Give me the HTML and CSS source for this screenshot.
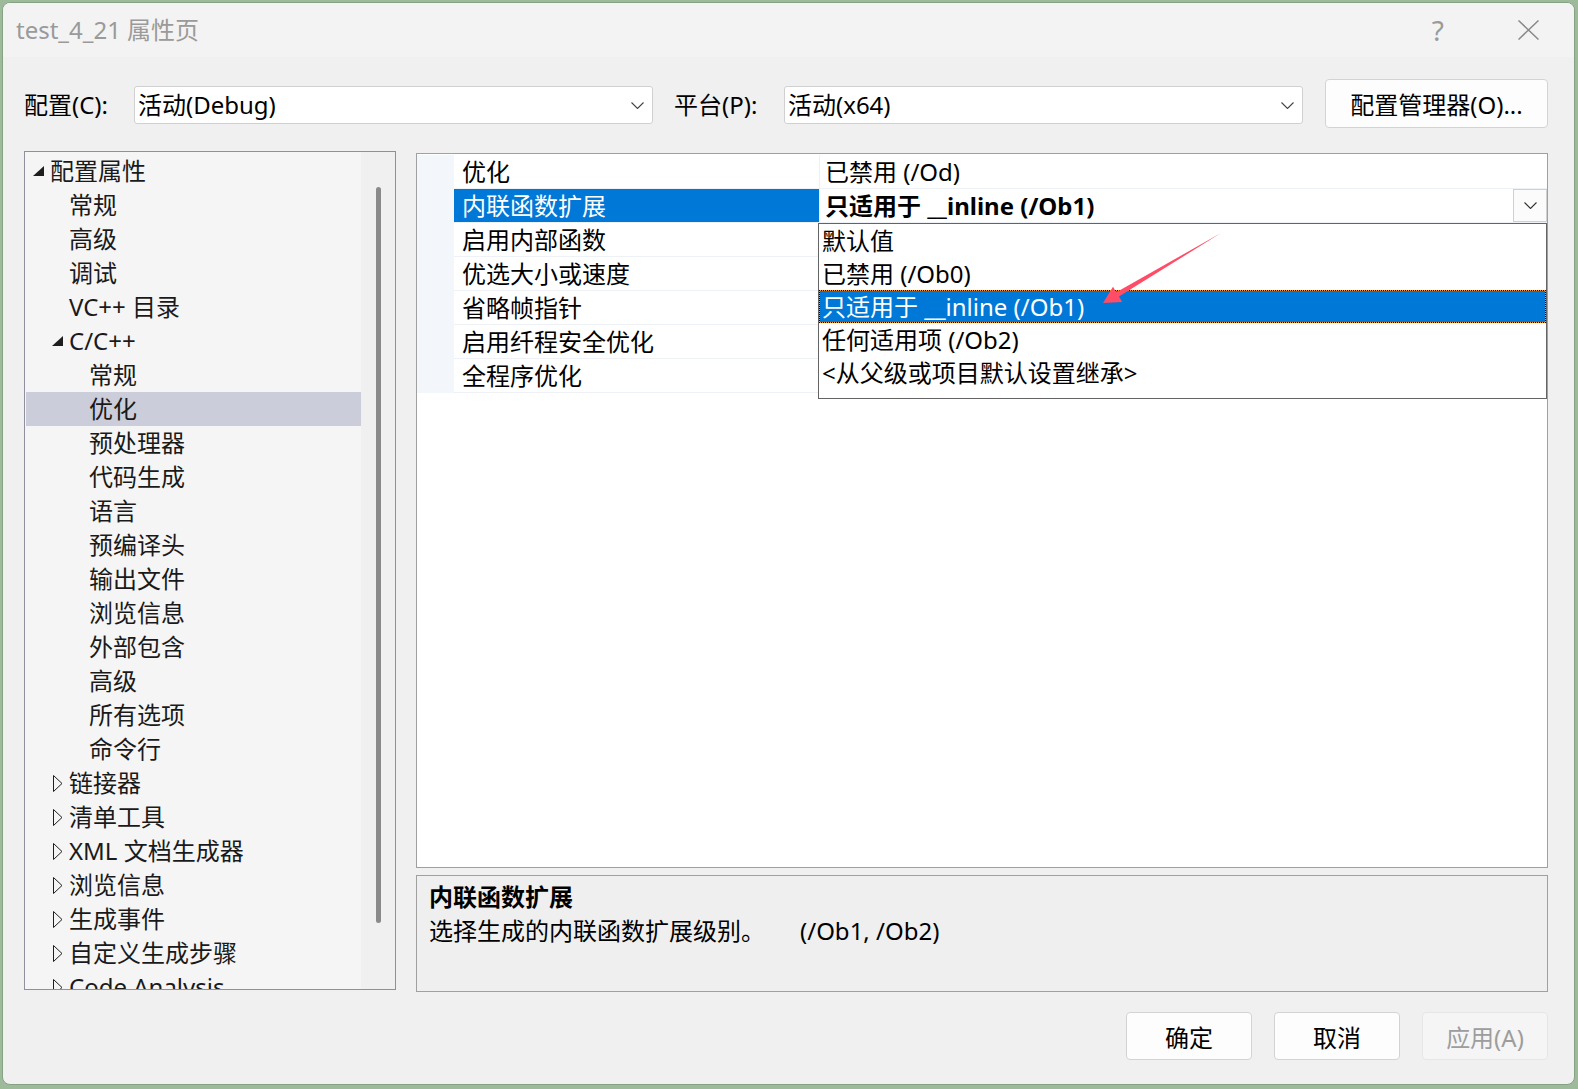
FILE: index.html
```html
<!DOCTYPE html>
<html lang="zh-CN">
<head>
<meta charset="utf-8">
<title>test_4_21 属性页</title>
<link rel="stylesheet" href="styles.css">
</head>
<body>
<div class="window">
  <div class="titlebar">
    <span class="title">test_4_21 属性页</span>
    <span class="help">?</span>
    <svg class="close" viewBox="0 0 21 20"><path d="M0.5 0.5 L20.5 19.5 M20.5 0.5 L0.5 19.5" stroke="#8a8a8a" stroke-width="1.5" fill="none"/></svg>
  </div>
  <div class="content">
    <div class="config-row">
      <span class="label">配置(C):</span>
      <div class="combo"><span>活动(Debug)</span><svg class="chevron" viewBox="0 0 13 7"><path d="M0.5 0.5 L6.5 6.5 L12.5 0.5" stroke="#444" stroke-width="1.1" fill="none"/></svg></div>
      <span class="label platform">平台(P):</span>
      <div class="combo"><span>活动(x64)</span><svg class="chevron" viewBox="0 0 13 7"><path d="M0.5 0.5 L6.5 6.5 L12.5 0.5" stroke="#444" stroke-width="1.1" fill="none"/></svg></div>
      <button class="btn mgr">配置管理器(O)...</button>
    </div>

    <div class="main">
      <div class="tree">
        <div class="tree-list">
          <div class="tree-row lv0"><span class="twisty"><svg class="exp" viewBox="0 0 11 10"><polygon points="0,10 11,0 11,10" fill="#1e1e1e"/></svg></span>配置属性</div>
          <div class="tree-row lv1"><span class="twisty"></span>常规</div>
          <div class="tree-row lv1"><span class="twisty"></span>高级</div>
          <div class="tree-row lv1"><span class="twisty"></span>调试</div>
          <div class="tree-row lv1"><span class="twisty"></span>VC++ 目录</div>
          <div class="tree-row lv1"><span class="twisty"><svg class="exp" viewBox="0 0 11 10"><polygon points="0,10 11,0 11,10" fill="#1e1e1e"/></svg></span>C/C++</div>
          <div class="tree-row lv2"><span class="twisty"></span>常规</div>
          <div class="tree-row lv2 selected"><span class="twisty"></span>优化</div>
          <div class="tree-row lv2"><span class="twisty"></span>预处理器</div>
          <div class="tree-row lv2"><span class="twisty"></span>代码生成</div>
          <div class="tree-row lv2"><span class="twisty"></span>语言</div>
          <div class="tree-row lv2"><span class="twisty"></span>预编译头</div>
          <div class="tree-row lv2"><span class="twisty"></span>输出文件</div>
          <div class="tree-row lv2"><span class="twisty"></span>浏览信息</div>
          <div class="tree-row lv2"><span class="twisty"></span>外部包含</div>
          <div class="tree-row lv2"><span class="twisty"></span>高级</div>
          <div class="tree-row lv2"><span class="twisty"></span>所有选项</div>
          <div class="tree-row lv2"><span class="twisty"></span>命令行</div>
          <div class="tree-row lv1"><span class="twisty"><svg class="col" viewBox="0 0 10 17"><polygon points="0.5,0.5 9,8.5 0.5,16.5" fill="none" stroke="#1e1e1e" stroke-width="1"/></svg></span>链接器</div>
          <div class="tree-row lv1"><span class="twisty"><svg class="col" viewBox="0 0 10 17"><polygon points="0.5,0.5 9,8.5 0.5,16.5" fill="none" stroke="#1e1e1e" stroke-width="1"/></svg></span>清单工具</div>
          <div class="tree-row lv1"><span class="twisty"><svg class="col" viewBox="0 0 10 17"><polygon points="0.5,0.5 9,8.5 0.5,16.5" fill="none" stroke="#1e1e1e" stroke-width="1"/></svg></span>XML 文档生成器</div>
          <div class="tree-row lv1"><span class="twisty"><svg class="col" viewBox="0 0 10 17"><polygon points="0.5,0.5 9,8.5 0.5,16.5" fill="none" stroke="#1e1e1e" stroke-width="1"/></svg></span>浏览信息</div>
          <div class="tree-row lv1"><span class="twisty"><svg class="col" viewBox="0 0 10 17"><polygon points="0.5,0.5 9,8.5 0.5,16.5" fill="none" stroke="#1e1e1e" stroke-width="1"/></svg></span>生成事件</div>
          <div class="tree-row lv1"><span class="twisty"><svg class="col" viewBox="0 0 10 17"><polygon points="0.5,0.5 9,8.5 0.5,16.5" fill="none" stroke="#1e1e1e" stroke-width="1"/></svg></span>自定义生成步骤</div>
          <div class="tree-row lv1"><span class="twisty"><svg class="col" viewBox="0 0 10 17"><polygon points="0.5,0.5 9,8.5 0.5,16.5" fill="none" stroke="#1e1e1e" stroke-width="1"/></svg></span>Code Analysis</div>
        </div>
        <div class="vscroll"><div class="thumb"></div></div>
      </div>

      <div class="right">
        <div class="grid">
          <div class="grid-row"><div class="gutter"></div><div class="name">优化</div><div class="value">已禁用 (/Od)</div></div>
          <div class="grid-row"><div class="gutter"></div><div class="name sel">内联函数扩展</div><div class="value bold"><span>只适用于 __inline (/Ob1)</span><span class="dd-btn"><svg class="chevron" viewBox="0 0 13 7"><path d="M0.5 0.5 L6.5 6.5 L12.5 0.5" stroke="#333" stroke-width="1.1" fill="none"/></svg></span></div></div>
          <div class="grid-row"><div class="gutter"></div><div class="name">启用内部函数</div><div class="value"></div></div>
          <div class="grid-row"><div class="gutter"></div><div class="name">优选大小或速度</div><div class="value"></div></div>
          <div class="grid-row"><div class="gutter"></div><div class="name">省略帧指针</div><div class="value"></div></div>
          <div class="grid-row"><div class="gutter"></div><div class="name">启用纤程安全优化</div><div class="value"></div></div>
          <div class="grid-row"><div class="gutter"></div><div class="name">全程序优化</div><div class="value"></div></div>

          <div class="dropdown">
            <div class="dd-item">默认值</div>
            <div class="dd-item">已禁用 (/Ob0)</div>
            <div class="dd-item sel">只适用于 __inline (/Ob1)</div>
            <div class="dd-item">任何适用项 (/Ob2)</div>
            <div class="dd-item">&lt;从父级或项目默认设置继承&gt;</div>
          </div>
        </div>
        <div class="desc">
          <div class="desc-title">内联函数扩展</div>
          <div class="desc-text">选择生成的内联函数扩展级别。<span class="flags">(/Ob1, /Ob2)</span></div>
        </div>
      </div>
    </div>

    <div class="footer">
      <button class="btn action">确定</button>
      <button class="btn action">取消</button>
      <button class="btn action disabled">应用(A)</button>
    </div>
  </div>
</div>
<svg class="annotation" viewBox="0 0 1578 1089" width="1578" height="1089">
  <polygon points="1221,233 1119,296.6 1122.2,302.1 1103,303 1113,286.7 1116.3,292.2" fill="#ff4d68"/>
</svg>
</body>
</html>
```

FILE: styles.css
```css
* { box-sizing: border-box; }

html, body {
  margin: 0;
  padding: 0;
}

body {
  width: 1578px;
  height: 1089px;
  background: #9dbb9a;
  font-family: "Noto Sans", "Noto Sans CJK SC", sans-serif;
  font-size: 24px;
  color: #000;
  position: relative;
  overflow: hidden;
}

.window {
  margin: 2px 0 0 2px;
  width: 1573px;
  height: 1083px;
  background: #f0f0f0;
  border: 1px solid #86a285;
  border-radius: 8px;
  overflow: hidden;
  display: flex;
  flex-direction: column;
}

/* title bar */
.titlebar {
  height: 54px;
  flex: none;
  background: #f3f3f3;
  display: flex;
  align-items: center;
  padding-left: 13px;
}

.title {
  flex: 1;
  color: #9a9a9a;
  line-height: 54px;
  white-space: nowrap;
}

.help {
  color: #9a9a9a;
  font-size: 28px;
  line-height: 1;
  margin-right: 74px;
}

.close {
  width: 21px;
  height: 20px;
  margin-right: 35px;
  display: block;
}

/* content */
.content {
  flex: 1;
  padding: 0 26px 0 21px;
  display: flex;
  flex-direction: column;
}

.config-row {
  margin-top: 22px;
  height: 49px;
  display: flex;
  align-items: flex-start;
}

.label {
  width: 110px;
  flex: none;
  margin-top: 7px;
  line-height: 38px;
  white-space: nowrap;
}

.label.platform {
  margin-left: 21px;
  width: 110px;
}

.combo {
  width: 519px;
  flex: none;
  height: 38px;
  margin-top: 7px;
  background: #fff;
  border: 1px solid #d0d0d0;
  border-radius: 3px;
  display: flex;
  align-items: center;
  justify-content: space-between;
  padding: 0 8px 0 3px;
  white-space: nowrap;
}

.combo span {
  line-height: 36px;
}

.chevron {
  width: 13px;
  height: 7px;
  display: block;
}

.btn {
  font: inherit;
  color: #000;
  background: #fdfdfd;
  border: 1px solid #d3d3d3;
  border-radius: 4px;
  padding: 0;
  white-space: nowrap;
}

.mgr {
  margin-left: 22px;
  width: 223px;
  height: 49px;
  flex: none;
}

/* main area */
.main {
  margin-top: 23px;
  display: flex;
  gap: 20px;
  align-items: flex-start;
}

.tree {
  width: 372px;
  height: 839px;
  flex: none;
  border: 1px solid #8f8f9d;
  background: #f5f5f5;
  display: flex;
}

.tree-list {
  flex: 1;
  padding: 2px 0 0 1px;
  overflow: hidden;
}

.tree-row {
  height: 34px;
  line-height: 34px;
  display: flex;
  align-items: center;
  white-space: nowrap;
  color: #1a1a1a;
}

.tree-row.selected {
  background: #cbcdda;
}

.lv0 { padding-left: 4px; }
.lv1 { padding-left: 23px; }
.lv2 { padding-left: 43px; }

.twisty {
  width: 20px;
  height: 34px;
  flex: none;
  display: flex;
  align-items: center;
}

.twisty .exp {
  width: 11px;
  height: 10px;
  margin-left: 3px;
  margin-top: -1px;
}

.twisty .col {
  width: 10px;
  height: 17px;
  margin-left: 4px;
}

.vscroll {
  width: 34px;
  flex: none;
  background: #f0f0f0;
}

.thumb {
  margin: 35px 0 0 15px;
  width: 5px;
  height: 736px;
  background: #8a8a8a;
  border-radius: 3px;
}

/* property grid */
.right {
  width: 1132px;
  flex: none;
  margin-top: 2px;
  display: flex;
  flex-direction: column;
}

.grid {
  height: 715px;
  border: 1px solid #a0a0a0;
  background: #fff;
  position: relative;
  padding-top: 1px;
}

.grid-row {
  display: flex;
  height: 34px;
}

.gutter {
  width: 37px;
  flex: none;
  background: #f3f6fb;
}

.name {
  width: 365px;
  flex: none;
  padding-left: 8px;
  line-height: 33px;
  border-bottom: 1px solid #eef1f6;
  white-space: nowrap;
}

.name.sel {
  background: #0078d7;
  color: #fff;
}

.value {
  flex: 1;
  display: flex;
  align-items: flex-start;
  padding-left: 5px;
  line-height: 33px;
  border-left: 1px solid #eef1f6;
  border-bottom: 1px solid #eef1f6;
  white-space: nowrap;
}

.value.bold {
  font-weight: 700;
}

.dd-btn {
  margin-left: auto;
  width: 34px;
  height: 33px;
  border: 1px solid #d0d0d0;
  background: #fbfbfb;
  display: flex;
  align-items: center;
  justify-content: center;
}

.dropdown {
  position: absolute;
  left: 401px;
  top: 69px;
  width: 729px;
  height: 176px;
  background: #fff;
  border: 1px solid #646464;
}

.dd-item {
  height: 33px;
  line-height: 33px;
  padding-left: 3px;
  white-space: nowrap;
}

.dd-item.sel {
  background: #0078d7;
  color: #fff;
  outline: 1px dotted #000;
  outline-offset: -1px;
  box-shadow: inset 0 0 0 1px #ff9a3c;
}

/* description */
.desc {
  margin-top: 7px;
  height: 117px;
  border: 1px solid #a0a0a0;
  background: #efefef;
  padding: 4px 12px;
  line-height: 34px;
}

.desc-title {
  font-weight: 700;
}

.flags {
  margin-left: 35px;
}

/* footer */
.footer {
  margin-top: 20px;
  display: flex;
  justify-content: flex-end;
  gap: 22px;
}

.action {
  width: 126px;
  height: 48px;
}

.action.disabled {
  background: #f5f5f5;
  border-color: #e6e6e6;
  color: #9d9d9d;
}

/* annotation arrow overlay */
.annotation {
  position: absolute;
  left: 0;
  top: 0;
  pointer-events: none;
}
```
